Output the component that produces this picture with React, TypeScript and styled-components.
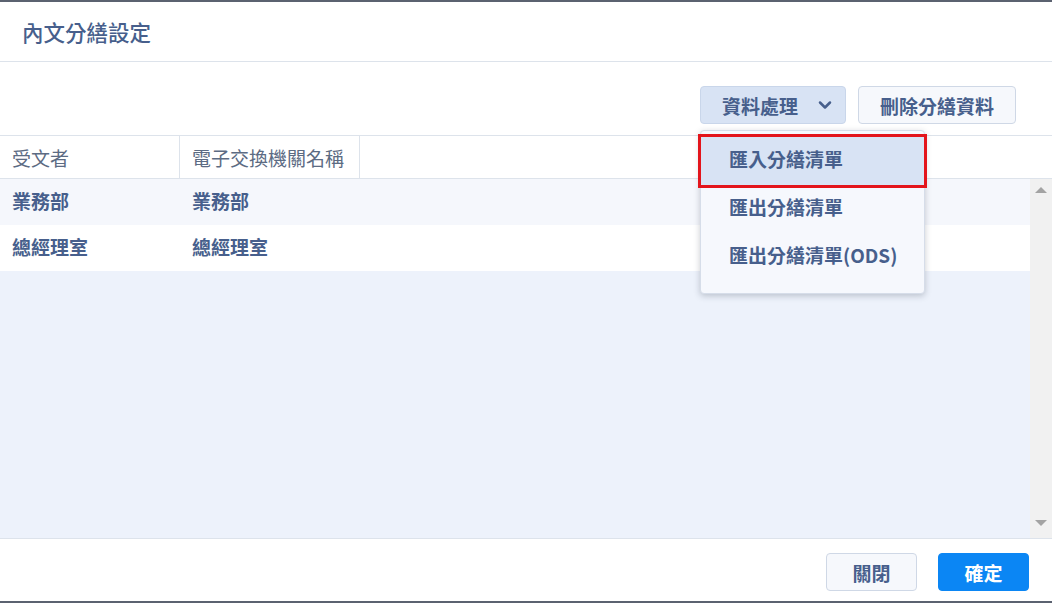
import React from 'react'
import styled, { createGlobalStyle } from 'styled-components'
import { ChevronDown } from 'lucide-react'

const GlobalStyle = createGlobalStyle`
  html, body { margin: 0; padding: 0; height: 100%; }
  body {
    background: #5b6270;
    font-family: 'Noto Sans CJK TC', 'Noto Sans', sans-serif;
    overflow: hidden;
  }
  #root { height: 100%; }
`

const ink = '#475f8c'

const Modal = styled.div`
  margin-top: 2px;
  height: 599px;
  background: #fff;
  display: flex;
  flex-direction: column;
`

const Header = styled.div`
  height: 59px;
  display: flex;
  align-items: center;
  padding-left: 22px;
  border-bottom: 1px solid #dde3eb;
  font-size: 21.5px;
  font-weight: 500;
  color: ${ink};
`

const Toolbar = styled.div`
  height: 74px;
  box-sizing: border-box;
  padding: 24px 36px 0 0;
  display: flex;
  justify-content: flex-end;
  align-items: flex-start;
  gap: 12px;
  border-bottom: 1px solid #dde3eb;
`

const Btn = styled.button<{ $tone?: 'soft' | 'light' | 'primary' }>`
  height: 38px;
  box-sizing: border-box;
  padding: 0 21px;
  border-radius: 4px;
  display: flex;
  align-items: center;
  font-family: inherit;
  font-size: 19px;
  font-weight: 700;
  cursor: pointer;
  border: 1px solid
    ${p => (p.$tone === 'primary' ? '#0b86f4' : p.$tone === 'soft' ? '#c9d6ea' : '#cfd8e6')};
  background: ${p => (p.$tone === 'primary' ? '#0b86f4' : p.$tone === 'soft' ? '#d8e3f4' : '#f6f8fc')};
  color: ${p => (p.$tone === 'primary' ? '#fff' : ink)};
`

const DropBtn = styled(Btn)`
  padding: 0 10px 0 21px;
  gap: 17px;
`

const MenuAnchor = styled.div`
  position: relative;
`

const Menu = styled.div`
  position: absolute;
  top: 44px;
  left: 0;
  width: 225px;
  box-sizing: border-box;
  padding: 6px 0 12px;
  background: #f6f8fd;
  border: 1px solid #d6dde9;
  border-radius: 4px;
  box-shadow: 0 2px 6px rgba(40, 50, 70, 0.25);
  z-index: 5;
`

const MenuItem = styled.div<{ $active?: boolean }>`
  height: 48px;
  box-sizing: border-box;
  padding: 0 0 5px 28px;
  display: flex;
  align-items: center;
  font-size: 19px;
  font-weight: 700;
  color: ${ink};
  background: ${p => (p.$active ? '#d8e3f4' : 'transparent')};
  outline: ${p => (p.$active ? '3px solid #e3141b' : 'none')};
`

const HeadRow = styled.div`
  height: 42px;
  display: flex;
  border-bottom: 1px solid #dde3eb;
`

const HeadCell = styled.div`
  width: 180px;
  box-sizing: border-box;
  padding-left: 12px;
  display: flex;
  align-items: center;
  font-size: 19px;
  color: #5c6b83;
  border-right: 1px solid #dde3eb;
`

const BodyArea = styled.div`
  flex: 1;
  display: flex;
  border-bottom: 1px solid #dde3eb;
  min-height: 0;
`

const Rows = styled.div`
  flex: 1;
  background: #edf2fb;
`

const Row = styled.div<{ $alt?: boolean }>`
  height: 46px;
  display: flex;
  background: ${p => (p.$alt ? '#f5f7fc' : '#fff')};
`

const Cell = styled.div`
  width: 180px;
  box-sizing: border-box;
  padding: 0 0 4px 12px;
  display: flex;
  align-items: center;
  font-size: 19px;
  font-weight: 700;
  color: ${ink};
`

const Scrollbar = styled.div`
  width: 22px;
  background: #f1f1f1;
  display: flex;
  flex-direction: column;
  justify-content: space-between;
  align-items: center;
  padding: 8px 0 12px;
`

const Arrow = styled.div<{ $down?: boolean }>`
  width: 0;
  height: 0;
  border-left: 6px solid transparent;
  border-right: 6px solid transparent;
  ${p => (p.$down ? 'border-top: 6px solid #a3a3a3;' : 'border-bottom: 6px solid #a3a3a3;')}
`

const Footer = styled.div`
  height: 62px;
  box-sizing: border-box;
  padding: 14px 23px 0 0;
  display: flex;
  justify-content: flex-end;
  align-items: flex-start;
  gap: 21px;
`

const FootBtn = styled(Btn)`
  width: 91px;
  justify-content: center;
  padding: 0;
`

const rows = [
  { to: '業務部', org: '業務部' },
  { to: '總經理室', org: '總經理室' }
]

const menuItems = ['匯入分繕清單', '匯出分繕清單', '匯出分繕清單(ODS)']

export default function App() {
  return (
    <>
      <GlobalStyle />
      <Modal>
        <Header>內文分繕設定</Header>
        <Toolbar>
          <MenuAnchor>
            <DropBtn $tone='soft'>
              資料處理
              <ChevronDown size={20} strokeWidth={3} color={ink} />
            </DropBtn>
            <Menu>
              {menuItems.map((m, i) => (
                <MenuItem key={m} $active={i === 0}>
                  {m}
                </MenuItem>
              ))}
            </Menu>
          </MenuAnchor>
          <Btn $tone='light'>刪除分繕資料</Btn>
        </Toolbar>
        <HeadRow>
          <HeadCell>受文者</HeadCell>
          <HeadCell>電子交換機關名稱</HeadCell>
        </HeadRow>
        <BodyArea>
          <Rows>
            {rows.map((r, i) => (
              <Row key={r.to} $alt={i % 2 === 0}>
                <Cell>{r.to}</Cell>
                <Cell>{r.org}</Cell>
              </Row>
            ))}
          </Rows>
          <Scrollbar>
            <Arrow />
            <Arrow $down />
          </Scrollbar>
        </BodyArea>
        <Footer>
          <FootBtn $tone='light'>關閉</FootBtn>
          <FootBtn $tone='primary'>確定</FootBtn>
        </Footer>
      </Modal>
    </>
  )
}
